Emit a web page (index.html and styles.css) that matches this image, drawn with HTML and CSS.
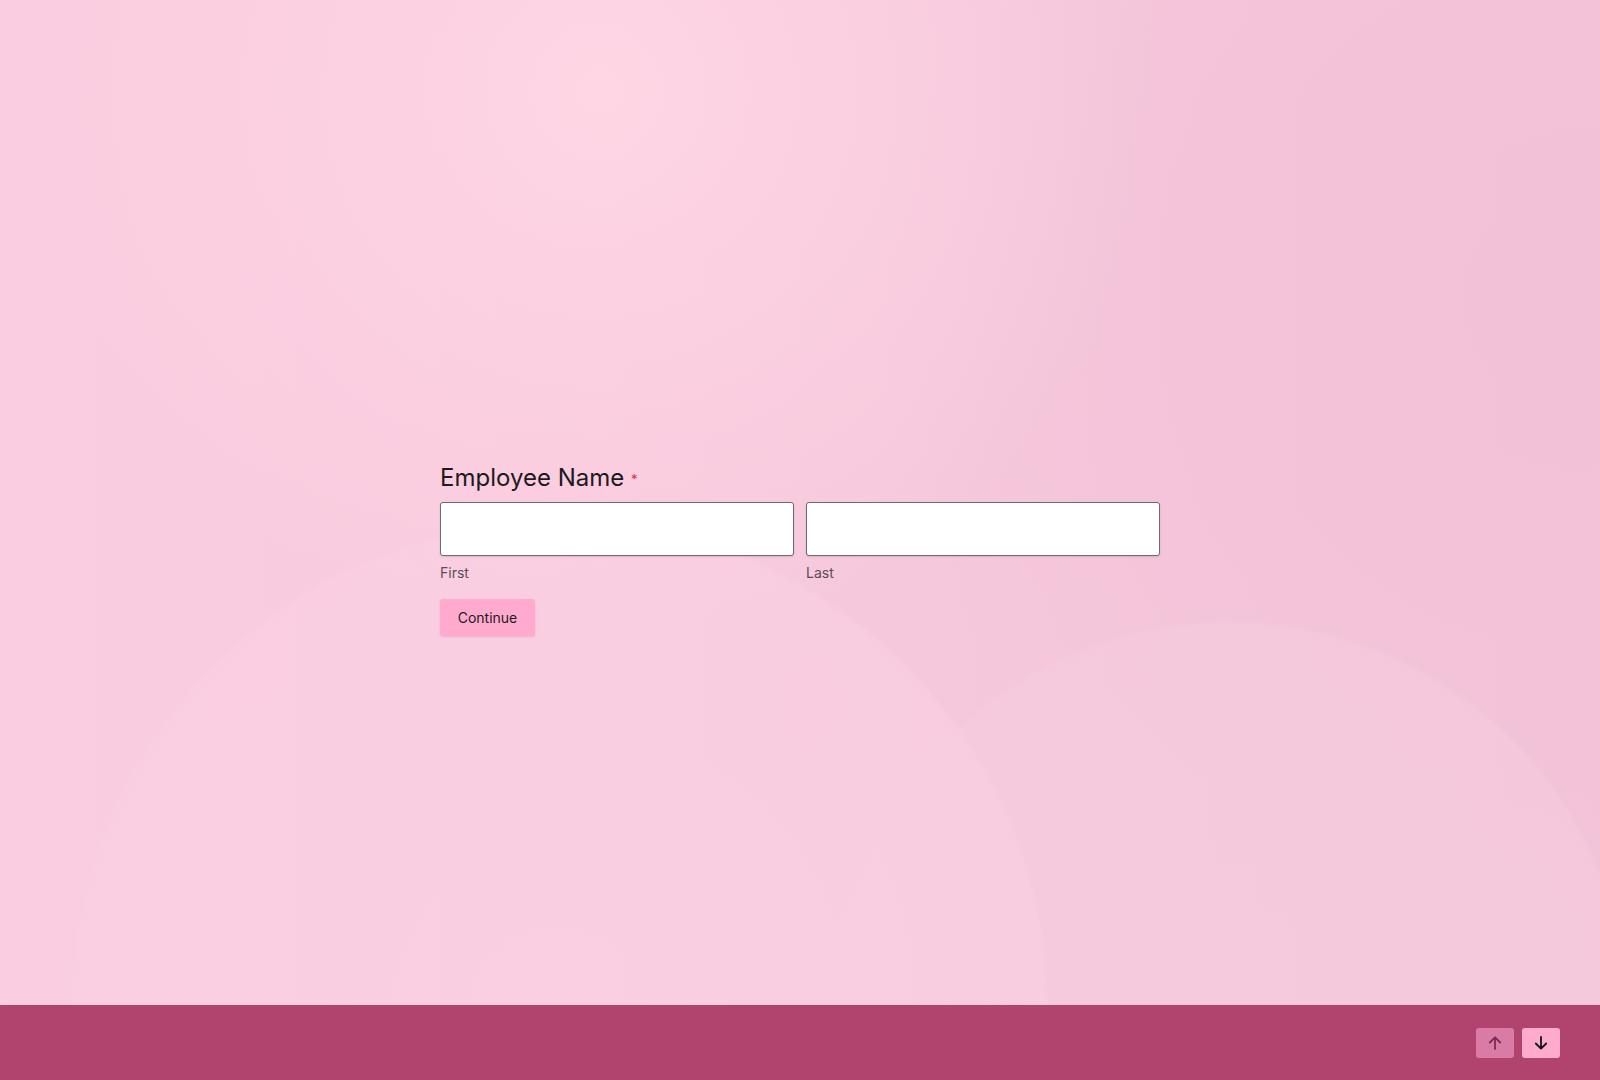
FILE: index.html
```html
<!DOCTYPE html>
<html lang="en">
<head>
    <meta charset="UTF-8">
    <meta name="viewport" content="width=device-width, initial-scale=1.0">
    <title>Employee Name</title>
    <link rel="stylesheet" href="styles.css">
</head>
<body>
    <main class="stage">
        <form class="question">
            <h2 class="question-title">Employee Name <span class="required">*</span></h2>
            <div class="name-fields">
                <div class="field">
                    <input type="text" id="firstName" aria-label="First">
                    <label for="firstName">First</label>
                </div>
                <div class="field">
                    <input type="text" id="lastName" aria-label="Last">
                    <label for="lastName">Last</label>
                </div>
            </div>
            <button type="button" class="btn">Continue</button>
        </form>
    </main>

    <footer class="footer">
        <div class="nav">
            <button class="nav-btn" disabled aria-label="Previous">
                <svg width="16" height="16" viewBox="0 0 16 16" fill="none" stroke="currentColor" stroke-width="1.8" stroke-linecap="round" stroke-linejoin="round"><path d="M8 14V2.5M2.8 7.5L8 2.3l5.2 5.2"/></svg>
            </button>
            <button class="nav-btn active" aria-label="Next">
                <svg width="16" height="16" viewBox="0 0 16 16" fill="none" stroke="currentColor" stroke-width="1.8" stroke-linecap="round" stroke-linejoin="round"><path d="M8 2v11.5M2.8 8.5L8 13.7l5.2-5.2"/></svg>
            </button>
        </div>
    </footer>
</body>
</html>
```

FILE: styles.css
```css
html, body {
    height: 100%;
}
body {
    margin: 0;
    font-family: Inter, "Noto Sans", sans-serif;
    color: #1c1a1b;
    display: flex;
    flex-direction: column;
    background-color: #f7c9dc;
    background-image:
        radial-gradient(circle at 600px 90px, #fed6e4 0, rgba(254, 214, 228, 0.6) 220px, rgba(250, 205, 224, 0) 560px),
        radial-gradient(circle at 560px 1010px, rgba(251, 208, 227, 0.8) 0, rgba(251, 208, 227, 0.5) 485px, rgba(251, 208, 227, 0) 490px),
        radial-gradient(circle at 1230px 1020px, rgba(246, 204, 222, 0.6) 0, rgba(246, 204, 222, 0.5) 395px, rgba(246, 204, 222, 0) 400px),
        radial-gradient(circle at 1580px 300px, #f1c1d7 0, rgba(241, 193, 215, 0) 700px),
        linear-gradient(90deg, #fbcde0, #f3c4d9);
}
.stage {
    flex: 1;
    display: flex;
    justify-content: center;
    padding-top: 463px;
}
.question {
    width: 720px;
}
.question-title {
    margin: 0 0 8px;
    font-size: 24px;
    line-height: 30px;
    font-weight: 400;
    color: #1d1a1c;
}
.required {
    color: #d2372d;
    font-size: 13px;
    vertical-align: middle;
}
.name-fields {
    display: flex;
    gap: 12px;
}
.field {
    flex: 1;
    display: flex;
    flex-direction: column;
}
.field input {
    height: 54px;
    box-sizing: border-box;
    border: 1px solid #6d6a70;
    border-radius: 3px;
    background: #ffffff;
    box-shadow: 0 1px 2px rgba(0, 0, 0, 0.12);
    font-size: 16px;
    padding: 0 12px;
}
.field input:focus {
    outline: none;
}
.field label {
    margin-top: 7px;
    font-size: 14px;
    line-height: 20px;
    color: #5d4c57;
}
.btn {
    margin-top: 16px;
    width: 95px;
    height: 37px;
    border: none;
    border-radius: 3px;
    background-color: #ffaace;
    color: #1c1a1b;
    font-family: inherit;
    font-size: 14px;
    box-shadow: 0 1px 2px rgba(120, 40, 80, 0.15);
    cursor: pointer;
}
.footer {
    height: 75px;
    background-color: #b0446f;
    display: flex;
    justify-content: flex-end;
    align-items: flex-start;
    padding: 23px 40px 0 0;
    box-sizing: border-box;
}
.nav {
    display: flex;
    gap: 8px;
}
.nav-btn {
    width: 38px;
    height: 30px;
    border: none;
    border-radius: 3px;
    padding: 0;
    display: flex;
    align-items: center;
    justify-content: center;
    background-color: #d97ba4;
    color: #7b2c51;
}
.nav-btn.active {
    background-color: #ffabcf;
    color: #141213;
    cursor: pointer;
}
```
